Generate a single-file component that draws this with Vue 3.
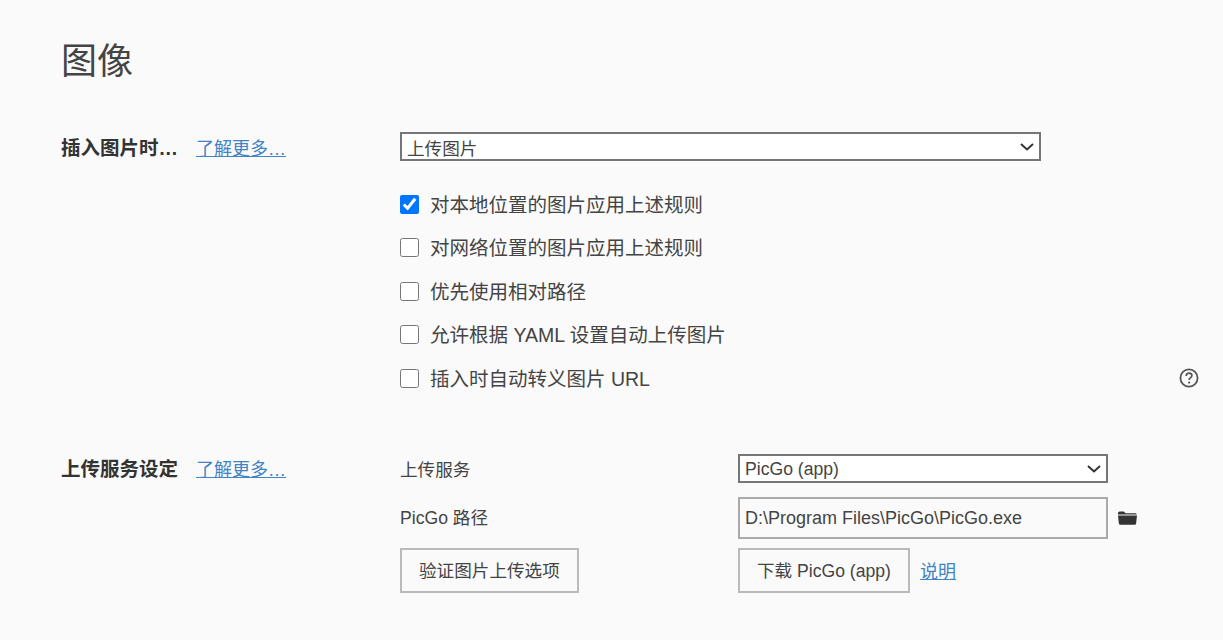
<script setup>
const checks = [
  { label: '对本地位置的图片应用上述规则', checked: true },
  { label: '对网络位置的图片应用上述规则', checked: false },
  { label: '优先使用相对路径', checked: false },
  { label: '允许根据 YAML 设置自动上传图片', checked: false },
  { label: '插入时自动转义图片 URL', checked: false, help: true },
]
</script>

<template>
  <main class="page">
    <h1 class="title">图像</h1>

    <section class="section first">
      <div class="head">
        <span class="name">插入图片时…</span>
        <a class="link" href="#">了解更多…</a>
      </div>
      <div class="body">
        <div class="select-wrap wide">
          <select class="select">
            <option>上传图片</option>
          </select>
          <svg class="chevron" viewBox="0 0 14 8" width="14" height="8">
            <path d="M1 1l6 5.500 6-5.500" fill="none" stroke="#333" stroke-width="2" />
          </svg>
        </div>
        <div class="checks">
          <label v-for="c in checks" :key="c.label" class="check">
            <input type="checkbox" :checked="c.checked" />
            <span class="check-text">{{ c.label }}</span>
            <svg v-if="c.help" class="help" viewBox="0 0 20 20" width="20" height="20">
              <circle cx="10" cy="10" r="8.6" fill="none" stroke="#555" stroke-width="1.8" />
              <path d="M7.200 7.900c0-1.700 1.200-2.800 2.900-2.800 1.600 0 2.800 1 2.800 2.400 0 1.200-.7 1.800-1.600 2.400-.8.6-1.200 1-1.200 2" fill="none" stroke="#555" stroke-width="1.700" />
              <circle cx="10.100" cy="14.600" r="1.100" fill="#555" />
            </svg>
          </label>
        </div>
      </div>
    </section>

    <section class="section second">
      <div class="head">
        <span class="name">上传服务设定</span>
        <a class="link" href="#">了解更多…</a>
      </div>
      <div class="form">
        <div class="row row-service">
          <span class="label">上传服务</span>
          <div class="select-wrap service">
            <select class="select">
              <option>PicGo (app)</option>
            </select>
            <svg class="chevron" viewBox="0 0 14 8" width="14" height="8">
              <path d="M1 1l6 5.500 6-5.500" fill="none" stroke="#333" stroke-width="2" />
            </svg>
          </div>
        </div>
        <div class="row row-path">
          <span class="label path-label">PicGo 路径</span>
          <input class="path" type="text" value="D:\Program Files\PicGo\PicGo.exe" />
          <svg class="folder" viewBox="0 0 19 14" width="19" height="14">
            <path d="M0 2a1.500 1.500 0 0 1 1.500-1.500h4.300l1.700 1.700h9.700a1.500 1.500 0 0 1 1.500 1.300H0z" fill="#333" />
            <path d="M0 4.400h19l-.9 8.200a1.400 1.400 0 0 1-1.400 1.200H2.300a1.400 1.400 0 0 1-1.400-1.200z" fill="#333" />
          </svg>
        </div>
        <div class="row">
          <div class="label"><button class="btn" type="button">验证图片上传选项</button></div>
          <button class="btn" type="button">下载 PicGo (app)</button>
          <a class="link note" href="#">说明</a>
        </div>
      </div>
    </section>
  </main>
</template>

<style>
html, body {
  margin: 0;
  background: #fafafa;
}
</style>

<style scoped>
.page {
  box-sizing: border-box;
  width: 1223px;
  height: 640px;
  overflow: hidden;
  padding: 36px 24px 0 61px;
  background: #fafafa;
  color: #444;
  font-family: "Liberation Sans", "Noto Sans CJK SC", sans-serif;
  font-size: 17.600px;
}
.title {
  margin: 0;
  font-size: 36px;
  line-height: 52px;
  font-weight: 400;
}
.section {
  display: grid;
  grid-template-columns: 339px 1fr;
}
.first { margin-top: 44px; }
.second { margin-top: 62px; }
.head {
  display: flex;
  align-items: center;
  height: 30px;
  gap: 18px;
}
.name {
  font-weight: 700;
  font-size: 19.500px;
  line-height: 30px;
  color: #333;
}
.first .name { padding-top: 2px; }
.second .link { padding-bottom: 2px; }
.link {
  color: #4183c4;
  text-decoration: underline;
  font-size: 18px;
}
.select-wrap {
  position: relative;
  height: 29px;
}
.wide { width: 641px; }
.service { width: 370px; }
.select {
  box-sizing: border-box;
  display: block;
  width: 100%;
  height: 100%;
  appearance: none;
  border: 2px solid #767676;
  border-radius: 0;
  background: #fff;
  color: #444;
  font: inherit;
  padding: 5px 0 0 5px;
  outline: none;
}
.service .select { padding-top: 0; }
.chevron {
  position: absolute;
  right: 7px;
  top: 11px;
  pointer-events: none;
}
.checks {
  margin-top: 29px;
  display: flex;
  flex-direction: column;
  gap: 15.500px;
}
.check {
  position: relative;
  display: flex;
  align-items: center;
  gap: 11px;
  height: 28px;
  font-size: 19.500px;
}
.check-text { padding-bottom: 2px; }
.check input {
  width: 19px;
  height: 19px;
  margin: 0;
  accent-color: #0075ff;
}
.help {
  position: absolute;
  left: 779px;
  top: 4px;
}
.row {
  display: flex;
  align-items: center;
}
.row-service { margin-bottom: 14px; }
.row-path { margin-bottom: 9px; }
.label {
  width: 338px;
  flex: none;
}
.path-label { padding-bottom: 3px; }
.path {
  box-sizing: border-box;
  width: 370px;
  height: 42px;
  border: 2px solid #aaa;
  background: #fafafa;
  color: #444;
  font: inherit;
  font-size: 18px;
  padding: 0 5px;
  outline: none;
  border-radius: 0;
}
.folder { margin-left: 10px; }
.btn {
  box-sizing: border-box;
  height: 45px;
  padding: 0 17px 2px;
  border: 2px solid #bbb;
  background: #fafafa;
  color: #444;
  font: inherit;
  font-size: 17.600px;
  border-radius: 0;
}
.note { margin-left: 10px; padding-bottom: 4px; }
</style>
